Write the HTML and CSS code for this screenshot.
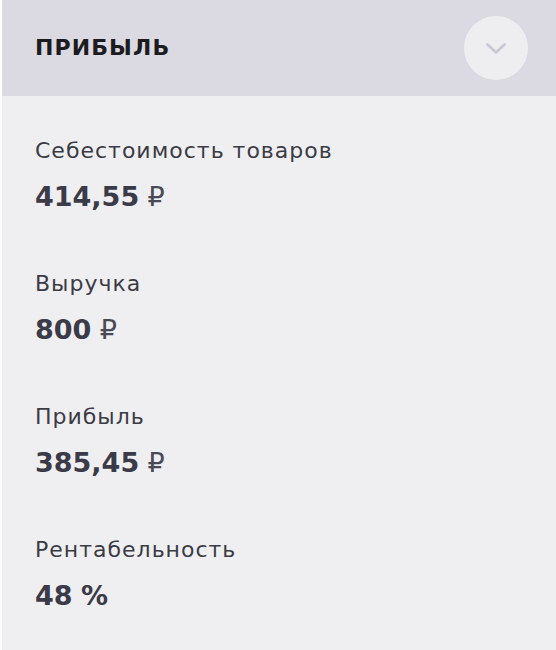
FILE: index.html
```html
<!DOCTYPE html>
<html lang="ru">
<head>
<meta charset="utf-8">
<link rel="stylesheet" href="styles.css">
</head>
<body>
<div class="panel">
  <div class="panel-head">
    <h2 class="panel-title">ПРИБЫЛЬ</h2>
    <button class="toggle" type="button" aria-label="Свернуть">
      <svg width="24" height="14" viewBox="0 0 24 14"><path d="M3.5 2.5 L12 10.5 L20.5 2.5" fill="none" stroke="#c9c8d6" stroke-width="2.8" stroke-linecap="round" stroke-linejoin="round"/></svg>
    </button>
  </div>
  <div class="panel-body">
    <div class="stat">
      <div class="stat-label">Себестоимость товаров</div>
      <div class="stat-value">414,55 <span class="unit">₽</span></div>
    </div>
    <div class="stat">
      <div class="stat-label">Выручка</div>
      <div class="stat-value">800 <span class="unit">₽</span></div>
    </div>
    <div class="stat">
      <div class="stat-label">Прибыль</div>
      <div class="stat-value">385,45 <span class="unit">₽</span></div>
    </div>
    <div class="stat">
      <div class="stat-label">Рентабельность</div>
      <div class="stat-value">48 %</div>
    </div>
  </div>
</div>
</body>
</html>
```

FILE: styles.css
```css
html, body {
  margin: 0;
  padding: 0;
  background: #ffffff;
}
body {
  font-family: "DejaVu Sans", "Noto Sans", sans-serif;
  width: 556px;
  height: 650px;
  overflow: hidden;
}
.panel {
  margin-left: 2px;
  height: 650px;
  background: #efeff1;
}
.panel-head {
  height: 96px;
  background: #dbdae3;
  display: flex;
  align-items: center;
  justify-content: space-between;
  padding: 0 28px 0 33px;
}
.panel-title {
  margin: 0;
  font-size: 22px;
  line-height: 26px;
  font-weight: 700;
  letter-spacing: 1.1px;
  color: #1c1c20;
}
.toggle {
  width: 64px;
  height: 64px;
  border-radius: 50%;
  border: 0;
  background: #eeeef1;
  display: flex;
  align-items: center;
  justify-content: center;
  padding: 0;
}
.toggle svg { margin-top: 1px; }
.panel-body {
  padding: 42px 33px 0;
  display: flex;
  flex-direction: column;
  gap: 58px;
}
.stat {
  display: flex;
  flex-direction: column;
  gap: 17px;
}
.stat-label {
  font-size: 22px;
  line-height: 26px;
  letter-spacing: 1px;
  color: #3b3b46;
}
.stat-value {
  font-size: 27px;
  line-height: 32px;
  height: 32px;
  font-weight: 700;
  word-spacing: -1px;
  color: #3a3a48;
}
.unit {
  font-weight: 400;
  font-size: 27px;
  line-height: 32px;
  color: #4a4a56;
}
```
